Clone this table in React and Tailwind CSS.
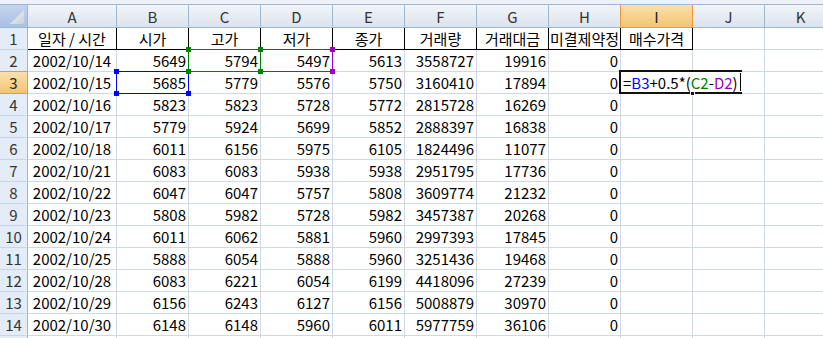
import React from 'react';

const letters = ['A', 'B', 'C', 'D', 'E', 'F', 'G', 'H', 'I', 'J', 'K'];
const widths = ['w-[89px]', 'w-[72px]', 'w-[72px]', 'w-[72px]', 'w-[72px]', 'w-[72px]', 'w-[72px]', 'w-[72px]', 'w-[72px]', 'w-[72px]', 'w-[72px]'];

const titles = ['일자 / 시간', '시가', '고가', '저가', '종가', '거래량', '거래대금', '미결제약정', '매수가격'];

const rows = [
  ['2002/10/14', 5649, 5794, 5497, 5613, 3558727, 19916, 0],
  ['2002/10/15', 5685, 5779, 5576, 5750, 3160410, 17894, 0],
  ['2002/10/16', 5823, 5823, 5728, 5772, 2815728, 16269, 0],
  ['2002/10/17', 5779, 5924, 5699, 5852, 2888397, 16838, 0],
  ['2002/10/18', 6011, 6156, 5975, 6105, 1824496, 11077, 0],
  ['2002/10/21', 6083, 6083, 5938, 5938, 2951795, 17736, 0],
  ['2002/10/22', 6047, 6047, 5757, 5808, 3609774, 21232, 0],
  ['2002/10/23', 5808, 5982, 5728, 5982, 3457387, 20268, 0],
  ['2002/10/24', 6011, 6062, 5881, 5960, 2997393, 17845, 0],
  ['2002/10/25', 5888, 6054, 5888, 5960, 3251436, 19468, 0],
  ['2002/10/28', 6083, 6221, 6054, 6199, 4418096, 27239, 0],
  ['2002/10/29', 6156, 6243, 6127, 6156, 5008879, 30970, 0],
  ['2002/10/30', 6148, 6148, 5960, 6011, 5977759, 36106, 0],
];

// colored range marker drawn over a referenced cell
const RefBox = ({ color }) => {
  const h = 'absolute w-[5px] h-[5px] ' + color.bg + ' ' + color.z;
  return (
    <>
      <div className={'absolute -inset-px border ' + color.border + ' ' + color.z} />
      <div className={h + ' -left-[3px] -top-[3px]'} />
      <div className={h + ' -right-[3px] -top-[3px]'} />
      <div className={h + ' -left-[3px] -bottom-[3px]'} />
      <div className={h + ' -right-[3px] -bottom-[3px]'} />
    </>
  );
};

const BLUE = { border: 'border-[#0000ff]', bg: 'bg-[#0000ff]', z: 'z-[1]' };
const GREEN = { border: 'border-[#008000]', bg: 'bg-[#008000]', z: 'z-[3]' };
const PURPLE = { border: 'border-[#9900cc]', bg: 'bg-[#9900cc]', z: 'z-[2]' };

const refs = { '3-1': BLUE, '2-2': GREEN, '2-3': PURPLE };

const FormulaEditor = () => (
  <>
    <div className="absolute -left-[2px] -top-[2px] -bottom-px w-[123px] bg-white border-2 border-r-0 border-[#111] z-10 flex items-center pl-[2px] whitespace-nowrap text-black">
      <span>=</span>
      <span className="text-[#0000ff]">B3</span>
      <span>+0.5*(</span>
      <span className="text-[#008000]">C2</span>
      <span>-</span>
      <span className="text-[#9900cc]">D2</span>
      <span>)</span>
      <span className="ml-[2px] w-px h-[18px] bg-black" />
    </div>
    <div className="absolute -right-[3px] -bottom-[3px] w-[5px] h-[5px] bg-[#111] border border-white z-20" />
  </>
);

const ColHeader = () => (
  <div className="flex h-[23px]">
    <div className="w-[28px] shrink-0 relative bg-linear-to-b from-[#c3d4ec] to-[#a9c1e4] border-r border-b border-[#9eb6ce]">
      <svg className="absolute right-[3px] bottom-[3px]" width="14" height="14" viewBox="0 0 14 14">
        <defs>
          <linearGradient id="tri" x1="0" y1="0" x2="1" y2="1">
            <stop offset="0" stopColor="#f4f6f8" />
            <stop offset="1" stopColor="#c9d0d8" />
          </linearGradient>
        </defs>
        <polygon points="14,0 14,14 0,14" fill="url(#tri)" />
      </svg>
    </div>
    {letters.map((l, i) => (
      <div
        key={l}
        className={
          widths[i] +
          ' shrink-0 flex items-center justify-center border-b text-[15px] ' +
          (i === 8
            ? 'bg-linear-to-b from-[#fae0ae] to-[#f4c56f] border-r border-[#f29536] text-[#222]'
            : i === 7
            ? 'bg-linear-to-b from-[#f2f5fa] to-[#dbe3ee] border-r border-r-[#f29536] border-b-[#9eb6ce] text-[#333]'
            : 'bg-linear-to-b from-[#f2f5fa] to-[#dbe3ee] border-r border-[#9eb6ce] text-[#333]')
        }
      >
        {l}
      </div>
    ))}
  </div>
);

const RowHead = ({ n, label }) => (
  <div
    className={
      'w-[28px] h-[22px] shrink-0 flex items-center justify-center border-r border-b text-[15px] ' +
      (n === 3
        ? 'bg-linear-to-b from-[#fae0ae] to-[#f4c56f] border-[#f29536] text-[#222]'
        : n === 2
        ? 'bg-[#e4ecf7] border-r-[#9eb6ce] border-b-[#f29536] text-[#333]'
        : 'bg-[#e4ecf7] border-r-[#9eb6ce] border-b-[#c8d5e6] text-[#333]')
    }
  >
    {label === undefined ? n : label}
  </div>
);

const TitleRow = () => (
  <div className="flex">
    <RowHead n={1} />
    {letters.map((l, i) => (
      <div
        key={l}
        className={
          widths[i] +
          ' h-[22px] shrink-0 flex items-center justify-center overflow-hidden whitespace-nowrap border-r border-b ' +
          (i < 9 ? 'border-[#000]' : 'border-[#d0d7e5]')
        }
      >
        {titles[i] || ''}
      </div>
    ))}
  </div>
);

const DataRow = ({ n, values, label }) => (
  <div className="flex">
    <RowHead n={n} label={label} />
    {letters.map((l, i) => {
      const v = values ? values[i] : undefined;
      const ref = refs[n + '-' + i];
      const isActive = n === 3 && i === 8;
      return (
        <div
          key={l}
          className={
            widths[i] +
            ' h-[22px] shrink-0 relative flex items-center whitespace-nowrap border-r border-b border-[#d0d7e5] ' +
            (i === 0 ? 'justify-center' : 'justify-end pr-[2px]')
          }
        >
          {v !== undefined ? v : ''}
          {ref && <RefBox color={ref} />}
          {isActive && <FormulaEditor />}
        </div>
      );
    })}
  </div>
);

export default function App() {
  return (
    <div className="w-[823px] h-[338px] overflow-hidden bg-white text-black text-[15px] leading-none font-['Noto_Sans_CJK_KR',sans-serif]">
      <div className="h-[5px] bg-[#eef2f8] border-b border-[#9fb5d0]" />
      <ColHeader />
      <TitleRow />
      {rows.map((r, idx) => (
        <DataRow key={idx} n={idx + 2} values={r} />
      ))}
      <DataRow n={15} label="" />
    </div>
  );
}
